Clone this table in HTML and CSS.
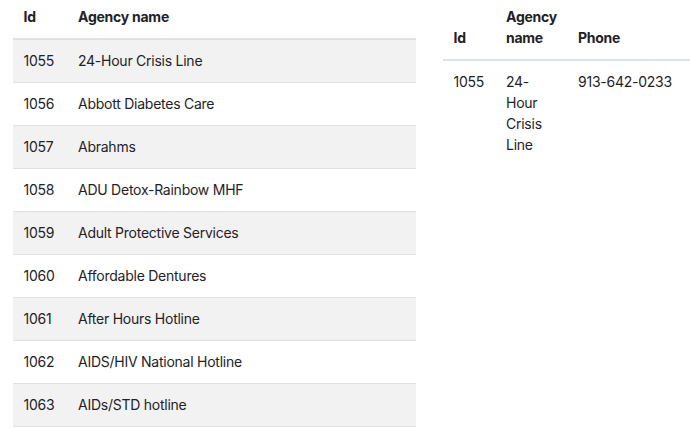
FILE: index.html
```html
<!DOCTYPE html>
<html>
<head>
<meta charset="utf-8">
<link rel="stylesheet" href="styles.css">
</head>
<body>
<div class="page">
  <table class="grid striped">
    <colgroup><col class="c-id"><col></colgroup>
    <thead>
      <tr><th>Id</th><th>Agency name</th></tr>
    </thead>
    <tbody>
      <tr><td>1055</td><td>24-Hour Crisis Line</td></tr>
      <tr><td>1056</td><td>Abbott Diabetes Care</td></tr>
      <tr><td>1057</td><td>Abrahms</td></tr>
      <tr><td>1058</td><td>ADU Detox-Rainbow MHF</td></tr>
      <tr><td>1059</td><td>Adult Protective Services</td></tr>
      <tr><td>1060</td><td>Affordable Dentures</td></tr>
      <tr><td>1061</td><td>After Hours Hotline</td></tr>
      <tr><td>1062</td><td>AIDS/HIV National Hotline</td></tr>
      <tr><td>1063</td><td>AIDs/STD hotline</td></tr>
    </tbody>
  </table>
  <table class="grid detail">
    <colgroup><col class="d-id"><col class="d-name"><col></colgroup>
    <thead>
      <tr><th>Id</th><th>Agency name</th><th>Phone</th></tr>
    </thead>
    <tbody>
      <tr><td>1055</td><td>24-Hour Crisis Line</td><td>913-642-0233</td></tr>
    </tbody>
  </table>
</div>
</body>
</html>
```
FILE: styles.css
```css
html, body {
  margin: 0;
  padding: 0;
  background: #ffffff;
}

body {
  font-family: Inter, "Liberation Sans", Arial, sans-serif;
  font-size: 14px;
  line-height: 21px;
  letter-spacing: -0.25px;
  color: #1f2226;
}

.page {
  display: flex;
  align-items: flex-start;
  gap: 27px;
  padding-left: 13px;
}

.grid {
  border-collapse: collapse;
  table-layout: fixed;
}

.grid th {
  text-align: left;
  font-weight: 700;
  vertical-align: bottom;
  padding: 6px 10.5px 11px;
  border-bottom: 2px solid #dee2e6;
}

.grid td {
  text-align: left;
  vertical-align: top;
  padding: 10px 10.5px 11px;
}

.striped {
  width: 403px;
}

.striped .c-id {
  width: 54.5px;
}

.striped td {
  border-bottom: 1px solid #dee2e6;
}

.striped tbody tr:nth-child(odd) {
  background: #f2f2f2;
}

.detail {
  flex: 1;
  width: 247px;
}

.detail .d-id {
  width: 52.5px;
}

.detail .d-name {
  width: 72px;
}
```
